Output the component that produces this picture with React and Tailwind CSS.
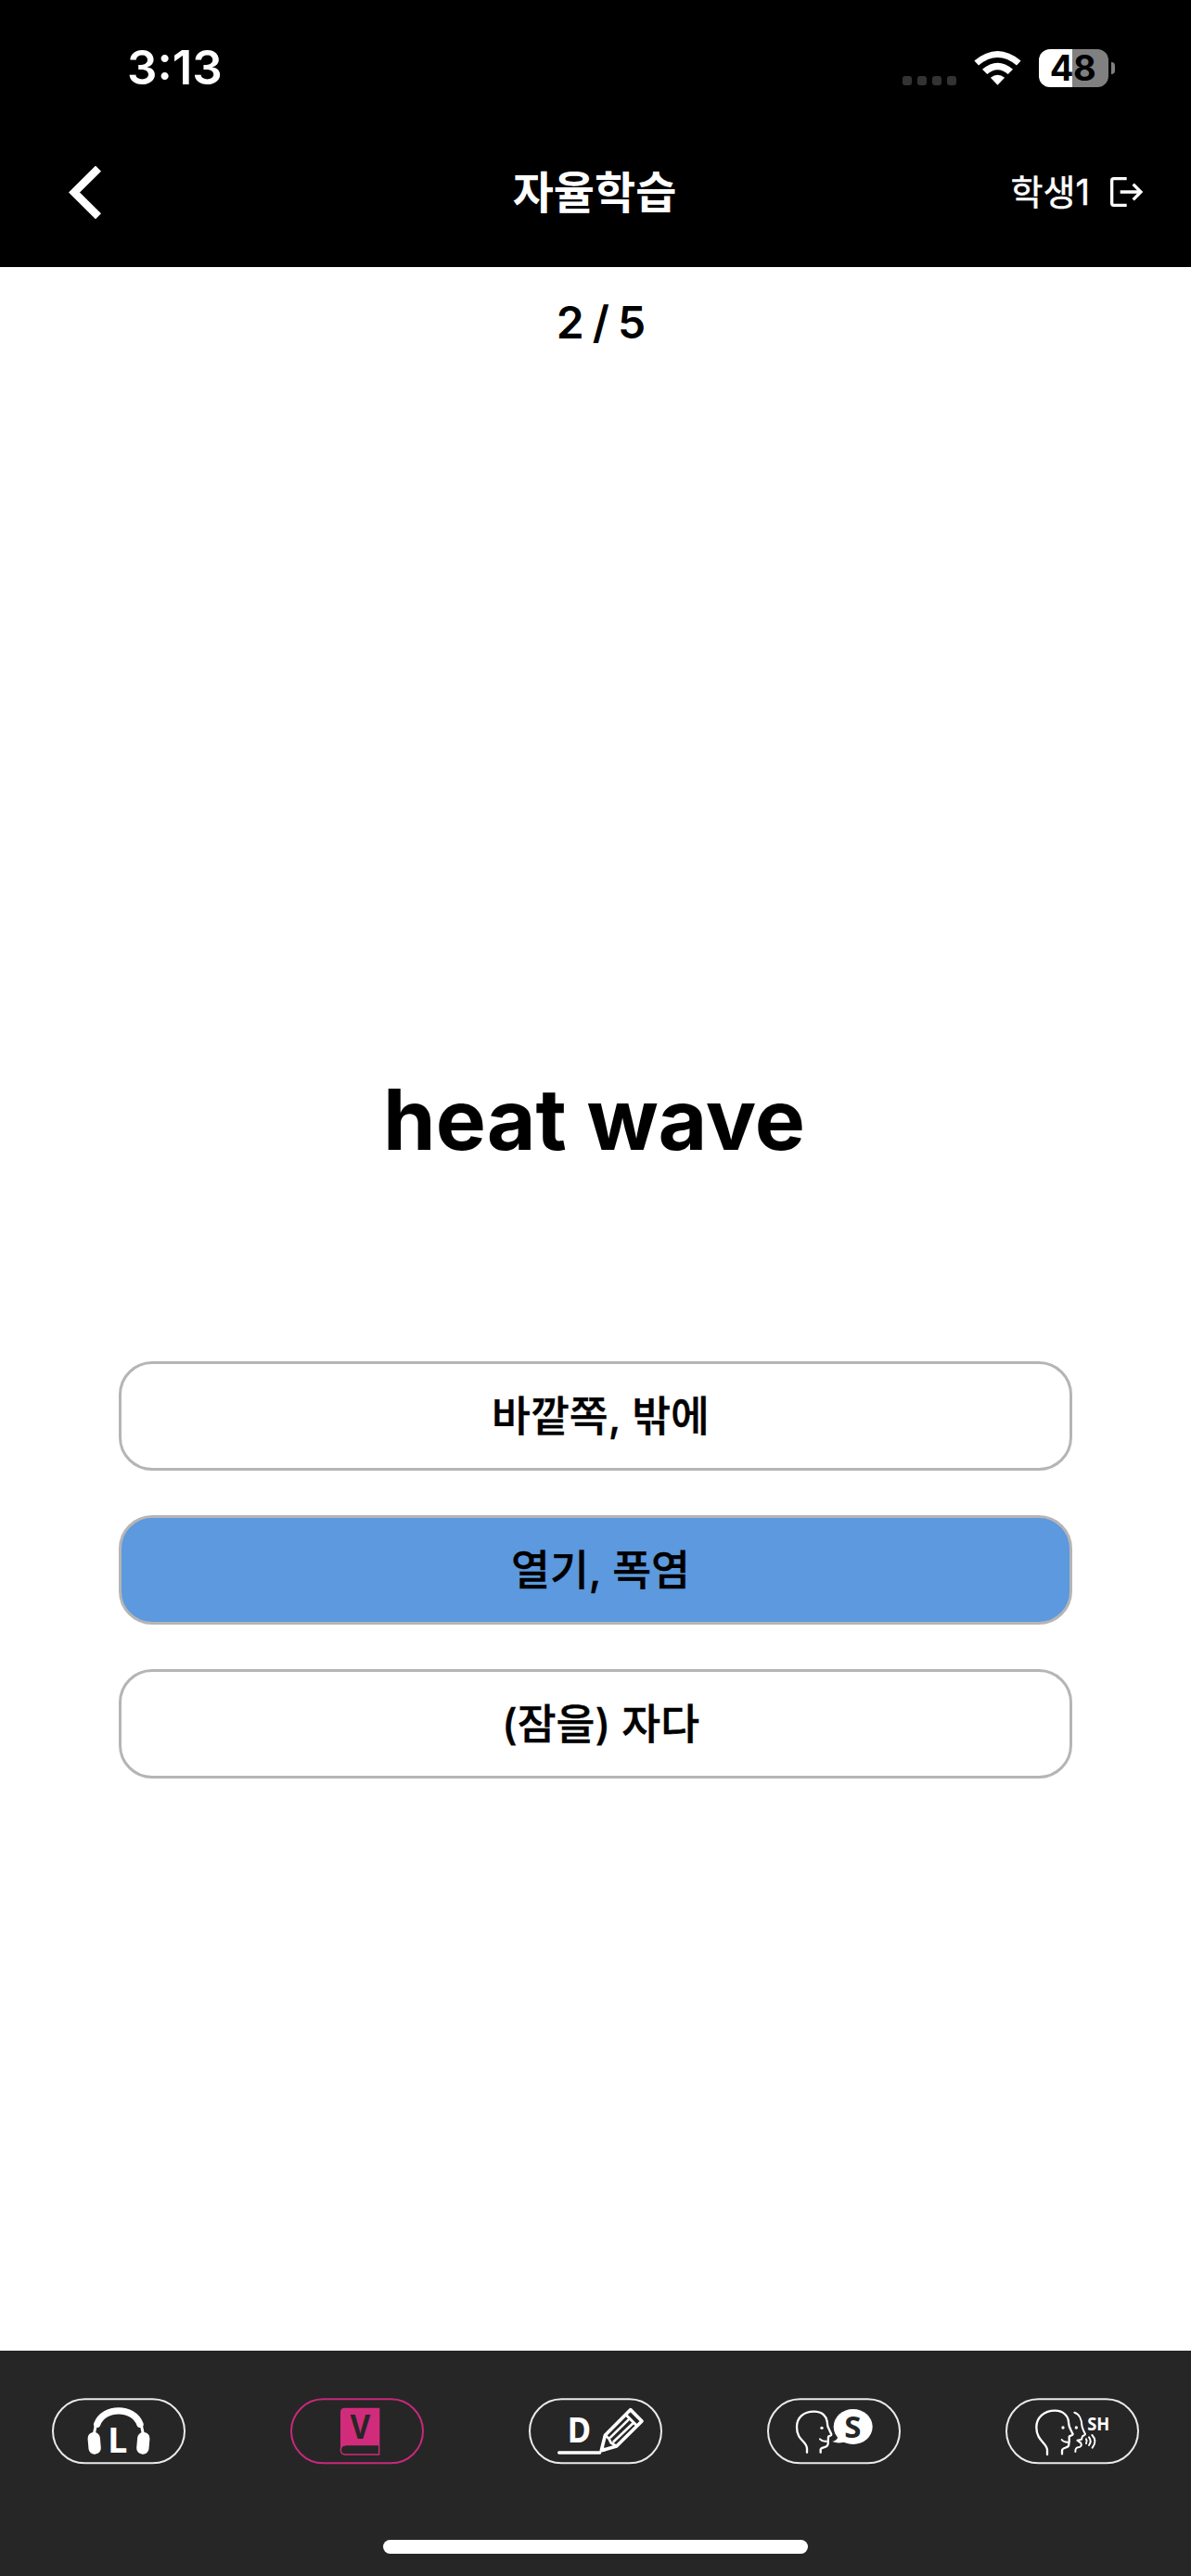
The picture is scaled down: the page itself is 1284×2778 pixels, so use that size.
import React from 'react';

const PILL = 'h-[72px] w-36 shrink-0';
const LETTER = "font-['Noto_Sans',sans-serif] font-bold";

const WifiIcon = () => (
  <svg viewBox="0 0 152 112" className="ml-[19px] h-[37px] w-[51px] fill-white">
    <path d="M0 32 Q76 -32 152 32 L138 47 Q76 -4 14 47 Z" />
    <path d="M26 60 Q76 17 126 60 L110 76 Q76 46 42 76 Z" />
    <path d="M53 87 Q76 69 99 87 L76 111 Z" />
  </svg>
);

const Battery = () => (
  <div className="ml-[19px] flex items-center gap-[3px]">
    <div className="flex h-[41px] w-[75px] items-center justify-center rounded-[12px] bg-[linear-gradient(to_right,#fff_36px,#808080_36px)] pr-0.5 pb-px">
      <span className="text-[38px] leading-none font-bold tracking-[-0.5px] text-black">48</span>
    </div>
    <div className="h-[13px] w-1 rounded-r-full bg-[#808080]" />
  </div>
);

const LogoutIcon = () => (
  <svg viewBox="0 0 105 96" className="h-8 w-[35px] fill-none stroke-white" strokeWidth="10">
    <path d="M53 5 H11 Q5 5 5 11 V85 Q5 91 11 91 H53" />
    <path d="M32 48 H98 M74 23 L99 48 L74 73" />
  </svg>
);

const Outline = ({ color = '#e9ebeb' }) => (
  <rect x="3" y="4" width="426" height="207" rx="103.5" fill="none" stroke={color} strokeWidth="6" />
);

const ListenIcon = () => (
  <svg viewBox="0 0 432 216" className={PILL}>
    <Outline />
    <path d="M146 85 C168 27 263 27 285 85" fill="none" stroke="#fff" strokeWidth="22" strokeLinecap="round" />
    <path d="M142 88 L136 116 M289 88 L295 116" stroke="#fff" strokeWidth="9" />
    <rect x="117" y="111" width="40" height="71" rx="19" fill="#fff" transform="rotate(-5 137 146)" />
    <rect x="275" y="111" width="40" height="71" rx="19" fill="#fff" transform="rotate(5 295 146)" />
    <text x="181" y="178" fontSize="113" fill="#fff" className={LETTER}>L</text>
  </svg>
);

const VocabIcon = () => (
  <svg viewBox="0 0 432 216" className={PILL}>
    <Outline color="#c8287a" />
    <path d="M162 168 V46 Q162 32 176 32 H289 V154 H178 Q163 154 162 168 Z" fill="#d12b7c" />
    <path d="M287 153 V183 H178 Q163 183 163 168 Q163 153 178 153" fill="none" stroke="#d12b7c" strokeWidth="4" />
    <text x="226" y="133" fontSize="108" textAnchor="middle" textLength="65" lengthAdjust="spacingAndGlyphs" fill="#262626" className={LETTER}>V</text>
  </svg>
);

const DictationIcon = () => (
  <svg viewBox="0 0 432 216" className={PILL}>
    <Outline />
    <text x="125" y="144" fontSize="112" textLength="76" lengthAdjust="spacingAndGlyphs" fill="#fff" className={LETTER}>D</text>
    <g fill="none" stroke="#fff" strokeLinecap="round" strokeLinejoin="round">
      <path d="M98 177 H230" strokeWidth="10" />
      <path d="M329 38 L366 75 L284 156 L235 170 L247 121 Z" strokeWidth="11" />
      <path d="M314 54 L350 90" strokeWidth="9" />
      <path d="M248 121 L259 131 L266 145 L284 156 M264 128 L326 67 M275 141 L339 80" strokeWidth="8" />
      <path d="M238 161 L245 168" strokeWidth="9" />
    </g>
  </svg>
);

const SpeakIcon = () => (
  <svg viewBox="0 0 432 216" className={PILL}>
    <Outline />
    <g fill="none" stroke="#fff" strokeWidth="7" strokeLinecap="round" strokeLinejoin="round">
      <path d="M129 176 V163 C127 138 96 138 96 94 C96 63 118 44 152 44 C180 44 192 61 194 76 C194 92 197 97 202 105 L208 118 C209 123 199 122 198 126 C197 132 199 147 195 154 C189 162 174 158 173 167 V176" />
      <path d="M171 133 C176 139 184 141 192 140" strokeWidth="6" />
    </g>
    <circle cx="177" cy="97" r="5" fill="#fff" />
    <ellipse cx="278" cy="93" rx="63" ry="57" fill="#fff" />
    <path d="M229 126 Q226 138 211 141 Q229 149 256 142 Z" fill="#fff" />
    <text x="277" y="130" fontSize="99" textAnchor="middle" fill="#262626" className={LETTER}>S</text>
  </svg>
);

const ShadowingIcon = () => (
  <svg viewBox="0 0 432 216" className={PILL}>
    <Outline />
    <g fill="none" stroke="#fff" strokeWidth="7" strokeLinecap="round" strokeLinejoin="round">
      <path d="M135 183 V168 C133 145 100 138 100 95 C100 63 125 41 160 41 C189 41 204 61 204 79 C204 94 209 99 218 117 C218 122 207 121 206 125 C207 138 206 148 204 155 C199 163 183 160 183 170 V181" />
      <path d="M223 47 C239 51 246 71 247 88 C248 98 253 107 258 117 C258 122 247 121 248 127 L246 134 L232 137 L244 146 C248 154 242 160 235 160 C227 161 226 165 226 174" strokeWidth="6" />
      <path d="M182 135 C187 143 195 143 202 143" strokeWidth="6" />
      <path d="M261 133 Q265 139 261 147 M270 127 Q280 140 270 153 M280 120 Q298 139 281 161" strokeWidth="6" />
    </g>
    <circle cx="186" cy="96" r="5" fill="#fff" />
    <circle cx="229" cy="96" r="5" fill="#fff" />
    <text x="265" y="104" fontSize="56" textLength="72" lengthAdjust="spacingAndGlyphs" fill="#fff" className={LETTER}>SH</text>
  </svg>
);

const options = [
  { id: 1, label: '바깥쪽, 밖에' },
  { id: 2, label: '열기, 폭염' },
  { id: 3, label: '(잠을) 자다' }
];

const tabs = [ListenIcon, VocabIcon, DictationIcon, SpeakIcon, ShadowingIcon];

const App = () => {
  const selected = 2;

  return (
    <div className="flex h-[2778px] w-[1284px] flex-col overflow-hidden bg-white font-['Inter','Noto_Sans_CJK_KR',sans-serif] text-black">

      {/* Status bar + header */}
      <header className="h-72 shrink-0 bg-black text-white">
        <div className="flex h-[146px] items-center justify-between pr-[82px] pl-[137px]">
          <span className="pb-px text-[51px] leading-none font-semibold">3:13</span>
          <div className="flex items-center">
            <div className="mt-[27px] flex gap-1.5">
              {[0, 1, 2, 3].map(i => <div key={i} className="size-2.5 rounded-[3px] bg-[#333]" />)}
            </div>
            <WifiIcon />
            <Battery />
          </div>
        </div>
        <div className="grid h-[122px] grid-cols-3 items-center px-[52px]">
          <svg viewBox="0 0 35 57" className="ml-[22px] h-[57px] w-[35px] fill-none stroke-white" strokeWidth="8.5">
            <path d="M32 2.7 L6 28.5 L32 54.3" />
          </svg>
          <h1 className="pt-px pr-0.5 text-center text-[48px] leading-none font-bold">자율학습</h1>
          <div className="flex items-center justify-end gap-[22px]">
            <span className="text-[38px] leading-none [-webkit-text-stroke:0.5px]">학생1</span>
            <LogoutIcon />
          </div>
        </div>
      </header>

      {/* Question */}
      <main className="flex flex-1 flex-col items-center">
        <p className="mt-[34px] pl-3 text-[48px] leading-[52px] font-semibold [word-spacing:-3px]">2 / 5</p>
        <h2 className="mt-[777px] pr-[3px] text-[91px] leading-[112px] font-bold">heat wave</h2>
        <div className="mt-[205px] flex w-[1028px] flex-col gap-12">
          {options.map(option => (
            <button
              key={option.id}
              className={`flex h-[118px] items-center justify-center rounded-[36px] border-3 border-[#b5b5b5] pt-0.5 pl-[11px] text-[45.5px] leading-none font-medium [-webkit-text-stroke:0.4px] ${
                option.id === selected ? 'bg-[#5c99de]' : 'bg-white'
              }`}
            >
              {option.label}
            </button>
          ))}
        </div>
      </main>

      {/* Bottom tabs */}
      <footer className="flex h-[243px] shrink-0 flex-col items-center bg-[#262626]">
        <nav className="mt-[51px] flex w-full">
          {tabs.map((Icon, i) => (
            <div key={i} className="flex flex-1 justify-center"><Icon /></div>
          ))}
        </nav>
        <div className="mt-[81px] h-[15px] w-[458px] rounded-full bg-white" />
      </footer>
    </div>
  );
};

export default App;
